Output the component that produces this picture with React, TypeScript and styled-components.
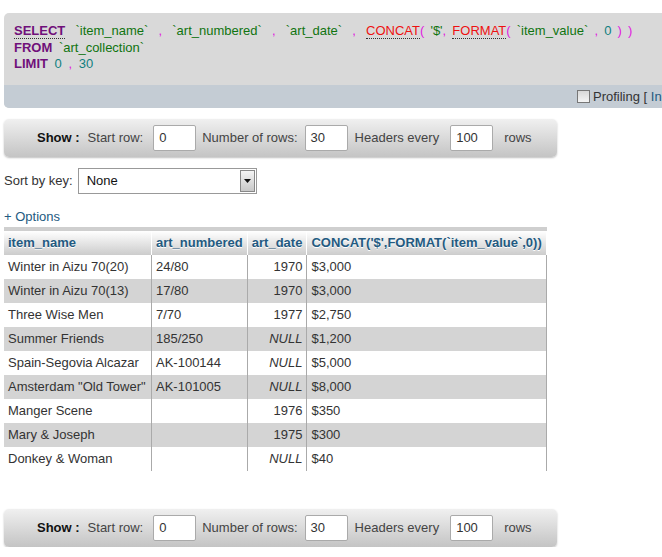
import React from "react";
import styled, { createGlobalStyle } from "styled-components";

const GlobalStyle = createGlobalStyle`
  body {
    margin: 0;
    background: #fff;
    font-family: "Liberation Sans", Arial, sans-serif;
    font-size: 13px;
    color: #333;
    overflow: hidden;
  }
`;

const Page = styled.div`
  width: 720px;
  padding: 13px 0 0 4px;
`;

const SqlBox = styled.div`
  background: #d9d9d9;
  border-radius: 5px 0 0 5px;
  overflow: hidden;
`;

const SqlText = styled.div`
  padding: 10px 10px 12px 10px;
  font-family: "Liberation Sans", Arial, sans-serif;
  font-size: 13px;
  line-height: 16.5px;
  white-space: pre;
`;

const SqlLine = styled.div<{ $ws: number }>`
  word-spacing: ${(p) => p.$ws}px;
`;

const Spaced = styled.span<{ $ws: number }>`
  word-spacing: ${(p) => p.$ws}px;
`;

const Kw = styled.span`
  color: #70107a;
  font-weight: bold;
`;
const KwDot = styled(Kw)`
  border-bottom: 1px dotted #333;
`;
const Ident = styled.span`
  color: #107410;
`;
const Punct = styled.span`
  color: #e020e0;
`;
const Fn = styled.span`
  color: #ee1111;
  border-bottom: 1px dotted #333;
`;
const Num = styled.span`
  color: #108080;
`;

const SqlFooter = styled.div`
  background: #c4ccd4;
  height: 23px;
  display: flex;
  align-items: center;
  padding-left: 573px;
  font-size: 13px;
  color: #333;
  white-space: pre;
`;

const Check = styled.span`
  width: 11px;
  height: 11px;
  border: 1px solid #777;
  background: linear-gradient(#d8d8d8, #f4f4f4);
  margin-right: 3px;
  display: inline-block;
`;

const LinkText = styled.span`
  color: #235a81;
`;

const ShowBar = styled.div<{ $top: number }>`
  width: 553px;
  height: 38px;
  margin-top: ${(p) => p.$top}px;
  box-sizing: border-box;
  border-radius: 5px;
  background: linear-gradient(#f0f0f0, #c4c4c4);
  box-shadow: 0 1px 2px rgba(0, 0, 0, 0.25);
  display: flex;
  align-items: center;
  padding-left: 33px;
  color: #444;
`;

const ShowLabel = styled.b`
  color: #111;
  margin-right: 8px;
`;

const BarLabel = styled.span<{ $gap?: number }>`
  margin-right: ${(p) => p.$gap ?? 8}px;
`;

const NumInput = styled.div<{ $gap: number }>`
  width: 43px;
  height: 26px;
  box-sizing: border-box;
  background: #fff;
  border: 1px solid #aaa;
  border-radius: 2px;
  padding-left: 5px;
  display: flex;
  align-items: center;
  color: #333;
  margin-right: ${(p) => p.$gap}px;
`;

const SortRow = styled.div`
  margin-top: 11px;
  display: flex;
  align-items: center;
  color: #333;
`;

const Select = styled.div`
  margin-left: 5px;
  width: 179px;
  height: 26px;
  box-sizing: border-box;
  border: 1px solid #999;
  background: #fff;
  display: flex;
  align-items: center;
  padding-left: 8px;
  color: #111;
`;

const SelectArrow = styled.span`
  margin-left: auto;
  margin-right: 1px;
  width: 15px;
  height: 22px;
  box-sizing: border-box;
  border: 1px solid #888;
  background: linear-gradient(#f4f4f4, #c8c8c8);
  display: flex;
  align-items: center;
  justify-content: center;
`;

const Options = styled.div`
  margin-top: 15px;
  color: #235a81;
`;

const Table = styled.table`
  margin-top: 3px;
  border-collapse: collapse;
  width: 543px;
`;

const Th = styled.th`
  text-align: left;
  font-weight: bold;
  color: #235a81;
  height: 24px;
  padding: 0 4px;
  border-right: 1px solid #fff;
  border-top: 4px solid #cfcfcf;
  background: linear-gradient(#ffffff, #cccccc);
  white-space: nowrap;
  text-shadow: 0 1px 0 #fff;
`;

const Tr = styled.tr<{ $odd: boolean }>`
  background: ${(p) => (p.$odd ? "#d4d4d4" : "#ffffff")};
`;

const Td = styled.td<{ $right?: boolean; $null?: boolean }>`
  height: 24px;
  padding: 0 4px;
  border-right: 1px solid #aaa;
  text-align: ${(p) => (p.$right ? "right" : "left")};
  font-style: ${(p) => (p.$null ? "italic" : "normal")};
  white-space: nowrap;
  color: #333;
`;

const rows: [string, string, string, string][] = [
  ["Winter in Aizu 70(20)", "24/80", "1970", "$3,000"],
  ["Winter in Aizu 70(13)", "17/80", "1970", "$3,000"],
  ["Three Wise Men", "7/70", "1977", "$2,750"],
  ["Summer Friends", "185/250", "NULL", "$1,200"],
  ["Spain-Segovia Alcazar", "AK-100144", "NULL", "$5,000"],
  ['Amsterdam "Old Tower"', "AK-101005", "NULL", "$8,000"],
  ["Manger Scene", "", "1976", "$350"],
  ["Mary & Joseph", "", "1975", "$300"],
  ["Donkey & Woman", "", "NULL", "$40"],
];

function ShowNav({ top }: { top: number }) {
  return (
    <ShowBar $top={top}>
      <ShowLabel>Show :</ShowLabel>
      <BarLabel $gap={10}>Start row:</BarLabel>
      <NumInput $gap={6}>0</NumInput>
      <BarLabel $gap={7}>Number of rows:</BarLabel>
      <NumInput $gap={7}>30</NumInput>
      <BarLabel $gap={11}>Headers every</BarLabel>
      <NumInput $gap={11}>100</NumInput>
      <BarLabel>rows</BarLabel>
    </ShowBar>
  );
}

export default function App() {
  return (
    <>
      <GlobalStyle />
      <Page>
        <SqlBox>
          <SqlText>
            <SqlLine $ws={6.5}>
              <KwDot>SELECT</KwDot> <Ident>`item_name`</Ident> <Punct>,</Punct>{" "}
              <Ident>`art_numbered`</Ident> <Punct>,</Punct> <Ident>`art_date`</Ident>{" "}
              <Punct>,</Punct>{" "}
              <Spaced $ws={2.5}>
                <Fn>CONCAT</Fn>
                <Punct>(</Punct> <Ident>'$'</Ident>
                <Punct>,</Punct> <Fn>FORMAT</Fn>
                <Punct>(</Punct> <Ident>`item_value`</Ident> <Punct>,</Punct> <Num>0</Num>{" "}
                <Punct>)</Punct> <Punct>)</Punct>
              </Spaced>
            </SqlLine>
            <SqlLine $ws={3}>
              <Kw>FROM</Kw> <Ident>`art_collection`</Ident>
            </SqlLine>
            <SqlLine $ws={3}>
              <Kw>LIMIT</Kw> <Num>0</Num> <Punct>,</Punct> <Num>30</Num>
            </SqlLine>
          </SqlText>
          <SqlFooter>
            <Check />
            {"Profiling [ "}
            <LinkText>Inline</LinkText>
            {" ]"}
          </SqlFooter>
        </SqlBox>

        <ShowNav top={11} />

        <SortRow>
          Sort by key:
          <Select>
            None
            <SelectArrow>
              <svg width="7" height="4" viewBox="0 0 7 4">
                <path d="M0 0h7L3.5 4z" fill="#111" />
              </svg>
            </SelectArrow>
          </Select>
        </SortRow>

        <Options>+ Options</Options>

        <Table>
          <thead>
            <tr>
              <Th style={{ width: 139 }}>item_name</Th>
              <Th>art_numbered</Th>
              <Th>art_date</Th>
              <Th>CONCAT('$',FORMAT(`item_value`,0))</Th>
            </tr>
          </thead>
          <tbody>
            {rows.map((r, i) => (
              <Tr key={i} $odd={i % 2 === 1}>
                <Td>{r[0]}</Td>
                <Td>{r[1]}</Td>
                <Td $right $null={r[2] === "NULL"}>
                  {r[2]}
                </Td>
                <Td>{r[3]}</Td>
              </Tr>
            ))}
          </tbody>
        </Table>

        <ShowNav top={38} />
      </Page>
    </>
  );
}
